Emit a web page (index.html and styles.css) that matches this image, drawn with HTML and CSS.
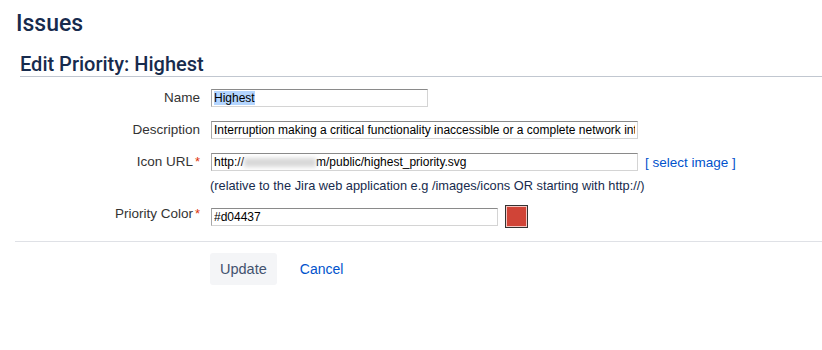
FILE: index.html
```html
<!DOCTYPE html>
<html lang="en">
<head>
  <meta charset="UTF-8">
  <meta name="viewport" content="width=device-width, initial-scale=1.0">
  <title>Edit Priority</title>
  <link rel="stylesheet" href="styles.css">
</head>
<body>
  <h1 class="page-title">Issues</h1>
  <form class="edit-form">
    <h2 class="form-title">Edit Priority: Highest</h2>
    <div class="fields">
      <div class="row">
        <label class="label" for="name">Name</label>
        <div class="field">
          <input class="text short" id="name" value="Highest">
        </div>
      </div>
      <div class="row">
        <label class="label" for="desc">Description</label>
        <div class="field">
          <input class="text long" id="desc" value="Interruption making a critical functionality inaccessible or a complete network interruption">
        </div>
      </div>
      <div class="row">
        <label class="label" for="icon">Icon URL<span class="req">*</span></label>
        <div class="field">
          <div class="inline">
            <div class="text long fake" id="icon">http://<span class="blur"></span>m/public/highest_priority.svg</div>
            <a class="link" href="#">[ select image ]</a>
          </div>
          <div class="help">(relative to the Jira web application e.g /images/icons OR starting with http://)</div>
        </div>
      </div>
      <div class="row color-row">
        <label class="label" for="color">Priority Color<span class="req">*</span></label>
        <div class="field">
          <div class="inline">
            <input class="text medium" id="color" value="#d04437">
            <span class="swatch"></span>
          </div>
        </div>
      </div>
    </div>
    <div class="buttons">
      <button class="btn" type="button">Update</button>
      <a class="cancel" href="#">Cancel</a>
    </div>
  </form>
  <script>
    document.getElementById('name').select();
  </script>
</body>
</html>
```

FILE: styles.css
```css
body {
  font-family: 'Liberation Sans', Arial, sans-serif;
  color: #172b4d;
  margin: 0;
  background: #fff;
}

.page-title {
  font-family: Roboto, 'Liberation Sans', sans-serif;
  font-size: 23px;
  font-weight: 500;
  margin: 0;
  padding: 10px 0 0 16px;
  line-height: 28px;
}

.edit-form {
  margin: 14px 0 0 15px;
}

.form-title {
  font-family: Roboto, 'Liberation Sans', sans-serif;
  font-size: 20px;
  font-weight: 500;
  line-height: 24px;
  margin: 0 0 0 5px;
  border-bottom: 1px solid #c1c7d0;
}

.fields {
  padding: 12px 0 13px;
  border-bottom: 1px solid #dfe1e6;
}

.row {
  display: flex;
  align-items: flex-start;
  margin-bottom: 14px;
}

.row:last-child {
  margin-bottom: 0;
}

.label {
  width: 185px;
  text-align: right;
  font-size: 13.5px;
  color: #333;
  line-height: 18px;
  padding-right: 11px;
}

.req {
  color: #de350b;
  margin-left: 2px;
  font-size: 13px;
}

.field {
  display: flex;
  flex-direction: column;
}

.inline {
  display: flex;
  align-items: center;
}

.text {
  font-family: 'Liberation Sans', Arial, sans-serif;
  font-size: 12px;
  color: #000;
  height: 18px;
  box-sizing: border-box;
  padding: 0 2px;
  margin: 0;
  border: 1px solid #d4d4d4;
  border-top-color: #8a8a8a;
  border-left-color: #a8a8a8;
  background: #fff;
  outline: none;
  overflow: hidden;
  white-space: nowrap;
}

.text::selection {
  background: #b4d5fe;
}

.fake {
  line-height: 16px;
}

.short {
  width: 217px;
}

.long {
  width: 427px;
}

.medium {
  width: 287px;
}

.blur {
  display: inline-block;
  width: 72px;
  height: 9px;
  background: #d8d8d8;
  vertical-align: -1px;
  filter: blur(2px);
}

.link {
  color: #0052cc;
  text-decoration: none;
  font-size: 13.5px;
  margin-left: 7px;
}

.link::first-letter {
  color: #172b4d;
}

.help {
  font-size: 12.8px;
  color: #172b4d;
  margin-top: 7px;
  margin-left: -1px;
}

.color-row {
  margin-top: -2px;
}

.swatch {
  width: 21px;
  height: 21px;
  margin-left: 7px;
  border: 1px solid #333;
  box-shadow: inset 0 0 0 1px #f5c5c0;
  background: #d04437;
}

.buttons {
  display: flex;
  align-items: center;
  padding: 11px 0 0 195px;
}

.btn {
  font-family: 'Liberation Sans', Arial, sans-serif;
  background: #f4f5f7;
  border: none;
  border-radius: 3px;
  color: #42526e;
  font-size: 14.5px;
  height: 32px;
  padding: 0 10px;
  cursor: pointer;
}

.cancel {
  color: #0052cc;
  text-decoration: none;
  font-size: 14px;
  margin-left: 23px;
}
```
